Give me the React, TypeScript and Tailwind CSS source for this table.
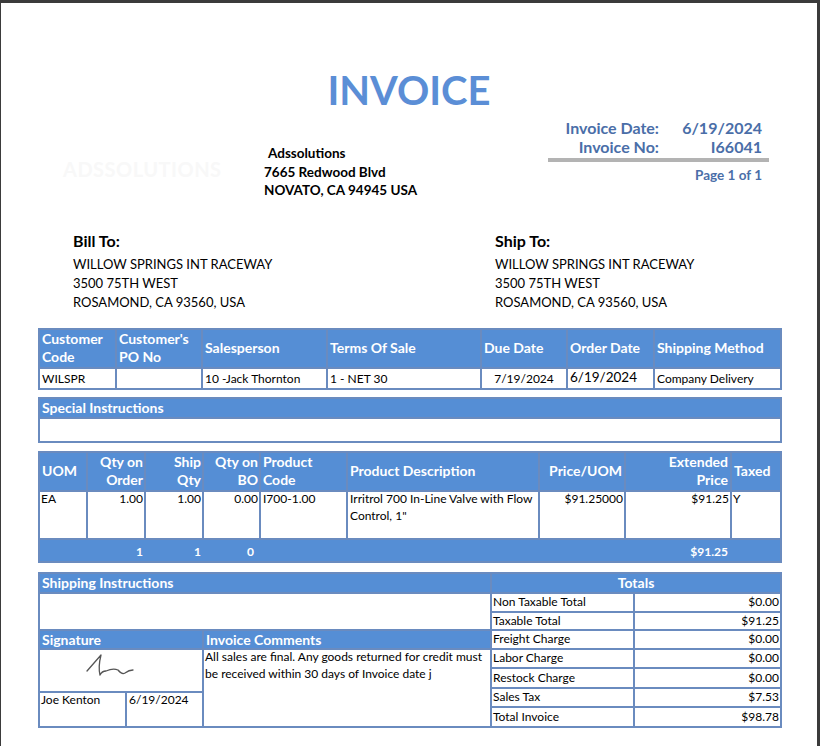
import React from "react";

const head = "bg-[#558ed5] text-white font-bold text-[14px] leading-[18px]";
const cell = "bg-white text-black text-[12px]";

function OrderInfo() {
  return (
    <div className="grid grid-cols-[75px_84px_123px_152px_84px_85px_125px] grid-rows-[37px_19px] gap-[2px] bg-[#6a8bbf] p-[2px]">
      <div className={`${head} flex items-center pl-[2px]`}>
        Customer
        <br />
        Code
      </div>
      <div className={`${head} flex items-center pl-[2px]`}>
        Customer's
        <br />
        PO No
      </div>
      <div className={`${head} flex items-center pl-[2px]`}>Salesperson</div>
      <div className={`${head} flex items-center pl-[2px]`}>Terms Of Sale</div>
      <div className={`${head} flex items-center pl-[2px]`}>Due Date</div>
      <div className={`${head} flex items-center pl-[2px]`}>Order Date</div>
      <div className={`${head} flex items-center pl-[2px]`}>Shipping Method</div>

      <div className={`${cell} pl-[2px] leading-[19px]`}>WILSPR</div>
      <div className={cell} />
      <div className={`${cell} pl-[2px] leading-[19px]`}>10 -Jack Thornton</div>
      <div className={`${cell} pl-[2px] leading-[19px]`}>1 - NET 30</div>
      <div className={`${cell} text-center leading-[19px]`}>7/19/2024</div>
      <div className={`${cell} pl-[2px] text-[13.5px] leading-[17px]`}>6/19/2024</div>
      <div className={`${cell} pl-[2px] leading-[19px]`}>Company Delivery</div>
    </div>
  );
}

function SpecialInstructions() {
  return (
    <div className="mt-[7px] grid grid-rows-[18px_22px] gap-[2px] bg-[#6a8bbf] p-[2px]">
      <div className={`${head} pl-[2px]`}>Special Instructions</div>
      <div className="bg-white" />
    </div>
  );
}

const itemCols = "grid-cols-[46px_56px_56px_55px_85px_190px_84px_104px_48px]";

// data cell: text sits a touch high in the row, like the printed report
function Top({ className, children }: { className: string; children?: React.ReactNode }) {
  return (
    <div className={`${cell} ${className} leading-[17px]`}>
      <div className="-mt-[2px]">{children}</div>
    </div>
  );
}

function Items() {
  return (
    <div className={`mt-[8px] grid ${itemCols} grid-rows-[37px_46px_21px] gap-[2px] bg-[#6a8bbf] p-[2px]`}>
      <div className={`${head} flex items-center pl-[2px]`}>UOM</div>
      <div className={`${head} flex items-center justify-end pr-[1px] text-right`}>
        Qty on
        <br />
        Order
      </div>
      <div className={`${head} flex items-center justify-end pr-[1px] text-right`}>
        Ship
        <br />
        Qty
      </div>
      <div className={`${head} flex items-center justify-end pr-[1px] text-right`}>
        Qty on
        <br />
        BO
      </div>
      <div className={`${head} flex items-center pl-[2px]`}>
        Product
        <br />
        Code
      </div>
      <div className={`${head} flex items-center pl-[2px]`}>Product Description</div>
      <div className={`${head} flex items-center justify-end pr-[2px]`}>Price/UOM</div>
      <div className={`${head} flex items-center justify-end pr-[2px] text-right`}>
        Extended
        <br />
        Price
      </div>
      <div className={`${head} flex items-center pl-[2px]`}>Taxed</div>

      <Top className="pl-[1px]">EA</Top>
      <Top className="pr-[1px] text-right">1.00</Top>
      <Top className="pr-[1px] text-right">1.00</Top>
      <Top className="pr-[1px] text-right">0.00</Top>
      <Top className="pl-[2px]">I700-1.00</Top>
      <Top className="pl-[2px]">Irritrol 700 In-Line Valve with Flow Control, 1"</Top>
      <Top className="pr-[1px] text-right">$91.25000</Top>
      <Top className="pr-[1px] text-right">$91.25</Top>
      <Top className="pl-[1px]">Y</Top>

      <div className={`col-span-9 grid ${itemCols} gap-[2px] bg-[#558ed5] pt-[3px] text-[12px] font-bold leading-[18px] text-white`}>
        <div />
        <div className="pr-[1px] text-right">1</div>
        <div className="pr-[1px] text-right">1</div>
        <div className="pr-[5px] text-right">0</div>
        <div />
        <div />
        <div />
        <div className="pr-[2px] text-right">$91.25</div>
        <div />
      </div>
    </div>
  );
}

function Signature() {
  return (
    <svg viewBox="0 0 162 41" className="h-full w-full">
      <path
        d="M47 21 L61 5 Q58 17 60 25 Q62 21 66 21 Q73 18 78 20 Q82 25 85 23 Q89 20 93 20"
        fill="none"
        stroke="#555"
        strokeWidth="1.3"
        strokeLinecap="round"
        strokeLinejoin="round"
      />
    </svg>
  );
}

const totals: [string, string, string][] = [
  ["Non Taxable Total", "$0.00", "row-start-2"],
  ["Taxable Total", "$91.25", "row-start-3"],
  ["Freight Charge", "$0.00", "row-start-4"],
  ["Labor Charge", "$0.00", "row-start-5"],
  ["Restock Charge", "$0.00", "row-start-6"],
  ["Sales Tax", "$7.53", "row-start-7 row-span-2"],
  ["Total Invoice", "$98.78", "row-start-9"],
];

function Bottom() {
  return (
    <div className="mt-[9px] grid grid-cols-[85px_75px_286px_141px_145px] grid-rows-[18px_17px_16px_17px_17px_18px_2px_13px_18px] gap-[2px] bg-[#6a8bbf] p-[2px]">
      <div className={`${head} col-span-3 col-start-1 row-start-1 pl-[2px]`}>Shipping Instructions</div>
      <div className={`${head} col-span-2 col-start-4 row-start-1 text-center`}>Totals</div>
      <div className="col-span-3 col-start-1 row-span-2 row-start-2 bg-white" />
      <div className={`${head} col-span-2 col-start-1 row-start-4 pl-[2px]`}>Signature</div>
      <div className={`${head} col-start-3 row-start-4 pl-[2px]`}>Invoice Comments</div>
      <div className="col-span-2 col-start-1 row-span-3 row-start-5 bg-white">
        <Signature />
      </div>
      <Top className="col-start-1 row-span-2 row-start-8 pl-[1px]">Joe Kenton</Top>
      <Top className="col-start-2 row-span-2 row-start-8 pl-[2px]">6/19/2024</Top>
      <Top className="col-start-3 row-span-5 row-start-5 pl-[1px]">
        All sales are final. Any goods returned for credit must be received within 30 days of Invoice date j
      </Top>
      {totals.map(([label, value, row]) => (
        <React.Fragment key={label}>
          <div className={`${cell} col-start-4 ${row} flex items-center pl-[1px]`}>{label}</div>
          <div className={`${cell} col-start-5 ${row} flex items-center justify-end pr-[1px]`}>{value}</div>
        </React.Fragment>
      ))}
    </div>
  );
}

export default function App() {
  return (
    <div className="h-[746px] w-[820px] overflow-hidden bg-[#3b3b3b] pl-[1px] pr-[3px] pt-[3px] font-[Lato,sans-serif]">
      <div className="h-full bg-white">
        <div className="pt-[63px] text-center text-[40px] font-bold leading-[48px] text-[#5b8ed6]">INVOICE</div>

        <div className="flex items-start">
          <div className="ml-[62px] mt-[40px] w-[201px] text-[20px] font-bold tracking-wide text-[#f8f8f8]">
            ADSSOLUTIONS
          </div>
          <div className="mt-[30px] text-[13.5px] font-bold leading-[18.5px] text-black">
            <div className="pl-[4px]">Adssolutions</div>
            <div>7665 Redwood Blvd</div>
            <div>NOVATO, CA 94945 USA</div>
          </div>
          <div className="ml-auto mr-[48px] mt-[4px] w-[221px] text-[16px] font-bold text-[#4a6ea8]">
            <div className="grid grid-cols-[111px_110px] leading-[19px]">
              <div className="text-right">Invoice Date:</div>
              <div className="pr-[7px] text-right">6/19/2024</div>
              <div className="text-right">Invoice No:</div>
              <div className="pr-[7px] text-right">I66041</div>
            </div>
            <div className="mt-[2px] h-[4px] bg-[#b3b3b3]" />
            <div className="mt-[5px] pr-[7px] text-right text-[13.5px] leading-[16px]">Page 1 of 1</div>
          </div>
        </div>

        <div className="mt-[31px] grid grid-cols-[422px_1fr] pl-[72px] text-black">
          {["Bill To:", "Ship To:"].map((t) => (
            <div key={t}>
              <div className="text-[16px] font-bold leading-[20px]">{t}</div>
              <div className="mt-[4px] text-[13px] leading-[19px]">
                <div>WILLOW SPRINGS INT RACEWAY</div>
                <div>3500 75TH WEST</div>
                <div>ROSAMOND, CA 93560, USA</div>
              </div>
            </div>
          ))}
        </div>

        <div className="ml-[37px] mt-[16px] w-[744px]">
          <OrderInfo />
          <SpecialInstructions />
          <Items />
          <Bottom />
        </div>
      </div>
    </div>
  );
}
